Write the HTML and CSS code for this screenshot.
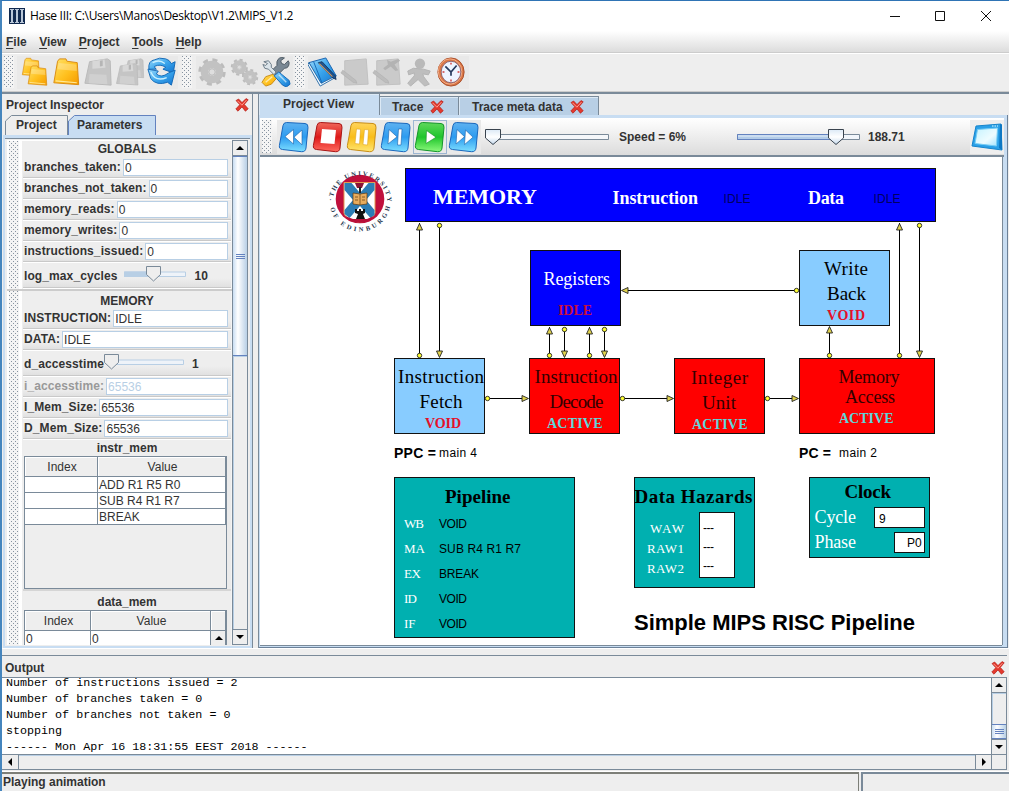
FILE: index.html
```
<!DOCTYPE html>
<html lang="en">
<head>
<meta charset="utf-8">
<title>Hase III</title>
<link rel="stylesheet" href="styles.css">
</head>
<body>
<svg class="defs" width="0" height="0" aria-hidden="true">
  <defs>
    <linearGradient id="gold" x1="0" y1="0" x2="1" y2="1"><stop offset="0" stop-color="#ffe36a"/><stop offset=".55" stop-color="#ffc01e"/><stop offset="1" stop-color="#f59a00"/></linearGradient>
    <linearGradient id="sky" x1="0" y1="0" x2="1" y2="1"><stop offset="0" stop-color="#9ad9fb"/><stop offset=".5" stop-color="#3aa5ec"/><stop offset="1" stop-color="#1273cf"/></linearGradient>
    <linearGradient id="btnBlue" x1="0" y1="0" x2="0" y2="1"><stop offset="0" stop-color="#5fb2f0"/><stop offset=".5" stop-color="#2c9bf0"/><stop offset="1" stop-color="#7fe0ff"/></linearGradient>
    <linearGradient id="btnRed" x1="0" y1="0" x2="0" y2="1"><stop offset="0" stop-color="#f0695c"/><stop offset=".5" stop-color="#dd1a1a"/><stop offset="1" stop-color="#ff6a5e"/></linearGradient>
    <linearGradient id="btnGold" x1="0" y1="0" x2="0" y2="1"><stop offset="0" stop-color="#ffd55c"/><stop offset=".5" stop-color="#f9bd18"/><stop offset="1" stop-color="#ffe673"/></linearGradient>
    <linearGradient id="btnGreen" x1="0" y1="0" x2="0" y2="1"><stop offset="0" stop-color="#5fd85c"/><stop offset=".5" stop-color="#1fc52c"/><stop offset="1" stop-color="#8df97c"/></linearGradient>
    <linearGradient id="thumb" x1="0" y1="0" x2="0" y2="1"><stop offset="0" stop-color="#dce9f6"/><stop offset=".5" stop-color="#fff"/><stop offset="1" stop-color="#c4d8ec"/></linearGradient>
    <linearGradient id="screen" x1="0" y1="0" x2="1" y2="1"><stop offset="0" stop-color="#c5f3ff"/><stop offset=".6" stop-color="#eefcff"/><stop offset="1" stop-color="#a4e4ff"/></linearGradient>
    <symbol id="cross" viewBox="0 0 14 14"><path d="M1 2.600 3.600 1 7 4.600 11 .6l2.200 1.200L9.300 6.400l3.900 4.400-2.800 2.400L7 8.900l-4 4.300L.8 11l4-4.300z" fill="#e43a2e" stroke="#b31d16" stroke-width=".7"/><path d="m2.500 2.800 4.400 4.400 4.500-5" stroke="#ff9a8e" fill="none"/></symbol>
    <symbol id="folder" viewBox="0 0 32 32"><path d="M7 4.500 9 2h7l1 2.500L28 6l1.500 23.500L3 27.500z" fill="url(#gold)" stroke="#d98a10"/><path d="M8 6.500 27 8l.5 7L7 13z" fill="#fff" opacity=".25"/><path d="m5 25.500 22.500 2" stroke="#ffe99b" stroke-width="1.200"/></symbol>
    <symbol id="disk" viewBox="0 0 32 32"><path d="M7 5 26 2l3 2 1 26-28-2z" fill="#c5c5c5" stroke="#b9b9b9"/><path d="m10 4.500 13-2 1 9-14 1z" fill="#d8d8d8"/><path d="m18 4 3-.5v6l-3 .5z" fill="#b5b5b5"/><path d="m7 18 18 1 1 10-20-1z" fill="#d0d0d0"/></symbol>
    <symbol id="gear" viewBox="0 0 32 32"><circle cx="16" cy="16" r="12.600" fill="none" stroke="#bcbcbc" stroke-width="4" stroke-dasharray="5.200 4.700"/><circle cx="16" cy="16" r="8" fill="none" stroke="#c2c2c2" stroke-width="8"/><circle cx="16" cy="16" r="3.500" fill="#dedede" stroke="#b5b5b5"/></symbol>
    <symbol id="sheet" viewBox="0 0 32 32"><path d="M5 4 28 2l2 27-25 1z" fill="#cacaca" stroke="#c0c0c0"/><path d="m3 14 14 11 1 3-4-1L1 17z" fill="#bdbdbd" stroke="#adadad" stroke-width=".6"/></symbol>
    <symbol id="tile" viewBox="0 0 32 32"><path d="M8.500 1.500 27 2.500q3.400.3 3 4L28 27q-.5 4-4.500 3.700L4.500 28.500Q.8 28 1.400 24.500L5 4.500q.6-3 3.500-3z"/></symbol>
    <symbol id="rew" viewBox="0 0 32 32"><path d="M15.500 8.500v14.500L7 15.600zM24 9v14.800L16 16.200z" fill="#fff" stroke="#1a5fa8" stroke-width=".6"/></symbol>
    <symbol id="fwd" viewBox="0 0 32 32"><path d="m9 8.500 7.500 7.200L8 23zM17.500 9l7.500 7.200-8.500 7.400z" fill="#fff" stroke="#1a5fa8" stroke-width=".6"/></symbol>
    <symbol id="pointer" viewBox="0 0 16 16"><path d="M.5.500h15v8.500L8 15.500.5 9z" fill="url(#thumb)" stroke="#39434e"/></symbol>
  </defs>
</svg>

<div class="window">
  <header class="titlebar">
    <svg class="app-icon" viewBox="0 0 16 16"><rect width="16" height="16" fill="#10294f"/><path d="M1 1h4v1H4v12h1v1H1v-1h1V2H1zM6 1h4v1H9v12h1v1H6v-1h1V2H6zM11 1h4v1h-1v12h1v1h-4v-1h1V2h-1z" fill="#b9c7d8"/></svg>
    <span class="title">Hase III: C:\Users\Manos\Desktop\V1.2\MIPS_V1.2</span>
    <svg class="win-controls" viewBox="0 0 110 14"><path d="M1 7.500h10M46.500 2.500h9v9h-9zM92 2l10 10M102 2 92 12" fill="none" stroke="#111"/></svg>
  </header>

  <nav class="menubar"><span><u>F</u>ile</span><span><u>V</u>iew</span><span><u>P</u>roject</span><span><u>T</u>ools</span><span><u>H</u>elp</span></nav>

  <div class="toolbar">
    <i class="grip"></i>
    <div class="group files">
      <svg viewBox="0 0 32 32"><use href="#folder" width="25" height="22"/><use href="#folder" x="7" y="8" width="25" height="24"/></svg>
      <svg viewBox="0 0 32 32"><use href="#folder" width="32" height="32"/></svg>
      <svg viewBox="0 0 32 32"><use href="#disk" width="32" height="32"/></svg>
      <svg viewBox="0 0 32 32"><use href="#disk" x="9" width="23" height="24"/><use href="#disk" y="5" width="26" height="27"/></svg>
      <svg viewBox="0 0 32 32"><path d="M2 13Q1 4 8 3q5-3 12-1 4 1 6 5l4-2-2 12-11-4 3-2Q14 7 8 10q0 2 2 3z" fill="url(#sky)" stroke="#1268b5"/><path d="m1 13 11 2-2 3q5 5 13-1l7-3-4 16-4-3Q10 31 4 23z" fill="url(#sky)" stroke="#1268b5"/><path d="M6 6q7-4 13 1M4 16q5 11 17 6" fill="none" stroke="#c8f0ff" stroke-width="1.500"/></svg>
    </div>
    <i class="grip"></i>
    <div class="group build">
      <svg viewBox="0 0 32 32"><use href="#gear" width="32" height="32"/></svg>
      <svg viewBox="0 0 32 32"><use href="#gear" x="1" y="1" width="20" height="20"/><use href="#gear" x="13" y="12" width="19" height="19"/></svg>
      <svg viewBox="0 0 32 32"><path d="m17 20 8-8q5 0 5-6l-1-2-4 4-3-1-1-3 4-3q-6-2-8 4v4l-5 5z" fill="#7a8894" stroke="#4d5963"/><path d="m14 18-9 3-4 6 4 4 6-2 7-8z" fill="url(#gold)" stroke="#c78a12"/><path d="m3 5 5-1 3 4v3l5 5-2 3-6-6-4-1-2-4 3 1 2-2z" fill="#dbe4ea" stroke="#687884"/><path d="m14 20 5-4 11 9 1 4-4 3-4-2z" fill="url(#sky)" stroke="#1264b5"/><path d="m5 27 7-6M19 19l8 8" stroke="#fff" opacity=".6" stroke-width="1.500"/></svg>
    </div>
    <i class="grip"></i>
    <div class="group run">
      <svg viewBox="0 0 32 32"><path d="m1 6 18-5 11 19-16 9z" fill="url(#sky)" stroke="#135fae"/><path d="M1 6q-2 2 0 4l12 21 16-9 1-2-16 8z" fill="#eef8ff" stroke="#2b6ba5"/><path d="m6 5 9 23" stroke="#1466b4"/><path d="m11 6 4-1 14 15 1 4-4-2z" fill="#23548d" stroke="#0a2951" stroke-width=".8"/><path d="m12 7 14 14" stroke="#d09b65" stroke-width="1.200"/></svg>
      <svg viewBox="0 0 32 32"><use href="#sheet" width="32" height="32"/></svg>
      <svg viewBox="0 0 32 32"><use href="#sheet" width="32" height="32"/><path d="m16 3 4 2 8-3 2 2-6 4 4 6-3 1-5-5-6 4-2-2 5-4z" fill="#b3b3b3"/></svg>
      <svg viewBox="0 0 32 32"><circle cx="17" cy="7" r="5.500" fill="#b9b9b9"/><path d="m10 12 11 1 7 2-2 4-6-1 1 3 6 8-5 2-7-7-8 7-3-3 7-8v-3l-6 2-1-4z" fill="#bebebe" stroke="#b2b2b2"/></svg>
      <svg viewBox="0 0 32 32"><ellipse cx="16" cy="16" rx="14" ry="15" fill="#d97646" stroke="#a94c28"/><ellipse cx="15" cy="15.500" rx="12.500" ry="13.500" fill="none" stroke="#f5b28d"/><ellipse cx="16" cy="16" rx="10.500" ry="11.500" fill="#eef4ff" stroke="#8a6372"/><path d="m10 10 6 6 6-7M16 16v4" fill="none" stroke="#26395d" stroke-width="1.800"/><path d="M16 6v2M16 24v2M7 16h2M23 16h2" stroke="#d23c3c" stroke-width="1.500"/></svg>
    </div>
  </div>

  <main class="workspace">
    <aside class="inspector">
      <div class="pane-head"><span>Project Inspector</span><svg class="x"><use href="#cross"/></svg></div>
      <div class="tabs">
        <svg class="tab-shape" viewBox="0 0 156 20"><path d="M.5 20V6L6.500.500H62.500V20" fill="#eee" stroke="#7a8a99"/><path d="M63.500 20V6L69.500.500H150.500V20" fill="#c8ddf2" stroke="#6382bf"/></svg>
        <span class="tab-name first">Project</span><span class="tab-name second">Parameters</span>
      </div>
      <div class="inspector-body">
        <div class="params">
          <section class="bar globals">
            <i class="grip"></i>
            <div class="fields">
              <h3>GLOBALS</h3>
              <div class="row"><label>branches_taken:</label><b>0</b></div>
              <div class="row"><label>branches_not_taken:</label><b>0</b></div>
              <div class="row"><label>memory_reads:</label><b>0</b></div>
              <div class="row"><label>memory_writes:</label><b>0</b></div>
              <div class="row"><label>instructions_issued:</label><b>0</b></div>
              <div class="row slide"><label>log_max_cycles</label><svg viewBox="0 0 62 16"><path d="M.5 6h61v4.500H.5z" fill="#eef3f9" stroke="#b8cfe5"/><path d="M0 5.500h29v5.500H0z" fill="#b8cfe5"/><path d="M22.500.500h14v8L29.500 15l-7-6.500z" fill="#eee" stroke="#7a8a99"/></svg><em>10</em></div>
            </div>
          </section>
          <section class="bar memory">
            <i class="grip"></i>
            <div class="fields">
              <h3>MEMORY</h3>
              <div class="row"><label>INSTRUCTION:</label><b>IDLE</b></div>
              <div class="row"><label>DATA:</label><b>IDLE</b></div>
              <div class="row slide low"><label>d_accesstime</label><svg viewBox="0 0 80 16"><path d="M7 6h72.500v4.500H7z" fill="#eef3f9" stroke="#b8cfe5"/><path d="M.5.500h14v8L7.500 15l-7-6.500z" fill="#eee" stroke="#7a8a99"/></svg><em>1</em></div>
              <div class="row off"><label>i_accesstime:</label><b>65536</b></div>
              <div class="row"><label>I_Mem_Size:</label><b>65536</b></div>
              <div class="row"><label>D_Mem_Size:</label><b>65536</b></div>
              <h3 class="mem-title">instr_mem</h3>
              <div class="grid instr">
                <div class="cells"><span class="th">Index</span><span class="th">Value</span><span></span><span>ADD R1 R5 R0</span><span></span><span>SUB R4 R1 R7</span><span></span><span>BREAK</span></div>
              </div>
              <h3 class="data-title">data_mem</h3>
              <div class="grid data">
                <div class="cells"><span class="th">Index</span><span class="th">Value</span><span class="th"></span><span>0</span><span>0</span><span class="mini"><svg viewBox="0 0 8 4"><path d="M0 4h8L4 0z"/></svg></span></div>
              </div>
            </div>
          </section>
        </div>
        <div class="vscroll side"><span class="arrow"><svg viewBox="0 0 8 4"><path d="M0 4h8L4 0z"/></svg></span><span class="knob"></span><span class="space"></span><span class="arrow"><svg viewBox="0 0 8 4"><path d="M0 0h8L4 4z"/></svg></span></div>
      </div>
    </aside>

    <section class="project">
      <div class="project-tabs"><span class="on">Project View</span><span class="trace">Trace<svg class="x"><use href="#cross"/></svg></span><span class="meta">Trace meta data<svg class="x"><use href="#cross"/></svg></span></div>
      <div class="project-body">
        <div class="playbar">
          <i class="grip"></i>
          <div class="buttons">
            <svg viewBox="0 0 32 32"><use href="#tile" fill="url(#btnBlue)" stroke="#1b68bd"/><use href="#rew"/></svg>
            <svg viewBox="0 0 32 32"><use href="#tile" fill="url(#btnRed)" stroke="#a81515"/><path d="m10 8 14 1-1.500 14L8.500 22z" fill="#fff"/></svg>
            <svg viewBox="0 0 32 32"><use href="#tile" fill="url(#btnGold)" stroke="#c88d16"/><path d="m10.500 8 4 .3L13.500 23l-4.500-.5zM18.500 8.500l4 .3L21.500 24l-4.500-.5z" fill="#fff" stroke="#d99c14" stroke-width=".5"/></svg>
            <svg viewBox="0 0 32 32"><use href="#tile" fill="url(#btnBlue)" stroke="#1b68bd"/><path d="m9 8.500 8 7.300L8 23zM18.500 8h3.500l-1 16h-3.500z" fill="#fff" stroke="#1a5fa8" stroke-width=".6"/></svg>
            <svg class="active" viewBox="0 0 32 32"><use href="#tile" fill="url(#btnGreen)" stroke="#14952a"/><path d="m12.500 9.500 9.500 6.700L12 22.500z" fill="#fff" stroke="#168a26" stroke-width=".6"/></svg>
            <svg viewBox="0 0 32 32"><use href="#tile" fill="url(#btnBlue)" stroke="#1b68bd"/><use href="#fwd"/></svg>
          </div>
          <svg class="slider speed" viewBox="0 0 126 16"><path d="M8 5.500h115.500v5H8z" fill="#f5f7fa" stroke="#7a8a99"/><use href="#pointer" width="16" height="16"/></svg>
          <span class="speed-label">Speed = 6%</span>
          <svg class="slider time" viewBox="0 0 124 16"><path d="M.5 5.500h122v5H.5z" fill="#f1f5fa" stroke="#7a8a99"/><path d="M.5 5.500H99v5H.5z" fill="#b3cce8" stroke="#6382bf"/><path d="M1 7h97" stroke="#e3edf8"/><use href="#pointer" x="91" width="16" height="16"/></svg>
          <span class="time-label">188.71</span>
          <svg class="screen-icon" viewBox="0 0 34 34"><path d="M6 6 31 4l1 26-30-4z" fill="#2aa0e8" stroke="#1685cc"/><path d="m30 4 2 .5V30l-3-2z" fill="#0d78c4"/><path d="m7.500 9.500 20-1.500-1 18L5 23.500z" fill="url(#screen)" stroke="#75cdf5"/><path d="M22 6h6" stroke="#dff" stroke-dasharray="1.500 1"/></svg>
        </div>
        <svg class="canvas" viewBox="260 157 742 488">
          <defs>
            <path id="arcTop" d="M332.500 203a27.300 27.300 0 1 1 55 0"/>
            <path id="arcBottom" d="M329.500 201a30.500 30.500 0 0 0 61 0"/>
            <g id="up"><path d="M0 .5 3 7h-6z" fill="#e0d24c" stroke="#222" stroke-width=".9"/></g>
            <g id="down"><path d="M0-.5 3-7h-6z" fill="#e0d24c" stroke="#222" stroke-width=".9"/></g>
            <g id="left"><path d="m.5 0 6.500 3v-6z" fill="#e0d24c" stroke="#222" stroke-width=".9"/></g>
            <g id="right"><path d="M-.5 0-7 3v-6z" fill="#e0d24c" stroke="#222" stroke-width=".9"/></g>
            <circle id="dot" r="2.200" fill="#ff3" stroke="#222" stroke-width=".9"/>
          </defs>

          <g class="crest">
            <circle cx="360" cy="199" r="24.300" fill="#c0103c"/>
            <path d="M344 182.500h31v30.500q-1 6-15.500 9.500-14.500-3.500-15.500-9.500z" fill="#fff" stroke="#e39a50"/>
            <path d="m344.500 183 7 0 8.500 10 8.500-10h6v7l-8.500 10 8.500 10v5l-4 3-10.500-12-10.500 12-5-4v-4l8.500-10-8.500-10z" fill="#2c7db5"/>
            <path d="M355 183h9l-2 5h-5z" fill="#8c1535"/><path d="M359 187h2v6h-2z" fill="#222"/>
            <path d="m353 193 7 1 7-1v11l-7 1-7-1z" fill="#e8ac5d" stroke="#5b3a16" stroke-width=".7"/><path d="M360 194v11M355 197h3M355 200h3M362 197h3M362 200h3" stroke="#704816" stroke-width=".8"/>
            <path d="M355 209h2v2h2v-2h2v2h2v-2h2v4l-2 1 2 5h-9l2-5-3-1z" fill="#111"/><path d="m345 216 8 3h14l7-3-4 5-10 2-11-2z" fill="#b80f38"/>
            <text class="ring"><textPath href="#arcTop" startOffset="2" textLength="87">·THE UNIVERSITY·</textPath></text>
            <text class="ring"><textPath href="#arcBottom" startOffset="7" textLength="83">OF EDINBURGH</textPath></text>
          </g>

          <g class="boxes">
            <rect x="405.500" y="168.500" width="530" height="53" fill="#00f"/>
            <rect x="530.500" y="250.500" width="90" height="75" fill="#00f"/>
            <rect x="799.500" y="250.500" width="90" height="75" fill="#8cf"/>
            <rect x="394.500" y="358.500" width="90" height="75" fill="#8cf"/>
            <rect x="529.500" y="358.500" width="90" height="75" fill="red"/>
            <rect x="674.500" y="358.500" width="90" height="75" fill="red"/>
            <rect x="799.500" y="358.500" width="135" height="75" fill="red"/>
            <rect x="394.500" y="477.500" width="180" height="160" fill="#00b0b0"/>
            <rect x="634.500" y="477.500" width="120" height="110" fill="#00b0b0"/>
            <rect x="809.500" y="477.500" width="120" height="80" fill="#00b0b0"/>
            <rect x="699.500" y="512.500" width="35" height="65" fill="#fff"/>
            <rect x="874.500" y="507.500" width="50" height="20" fill="#fff"/>
            <rect x="894.500" y="532.500" width="30" height="20" fill="#fff"/>
          </g>

          <path class="wires" d="M419.500 223v132M439.500 225v131M899.500 223v132M919.500 225v131M549.500 327v28M564.500 328v28M589.500 327v28M604.500 328v28M829.500 327v28M623 290.500h174M487 398.500h41M622 398.500h51M767 398.500h31"/>
          <use href="#up" x="419.500" y="223"/><use href="#up" x="899.500" y="223"/><use href="#up" x="549.500" y="327"/><use href="#up" x="589.500" y="327"/><use href="#up" x="829.500" y="326"/>
          <use href="#down" x="439.500" y="358"/><use href="#down" x="919.500" y="358"/><use href="#down" x="564.500" y="358"/><use href="#down" x="604.500" y="358"/>
          <use href="#left" x="621" y="290.500"/><use href="#right" x="529" y="398.500"/><use href="#right" x="674" y="398.500"/><use href="#right" x="799" y="398.500"/>
          <use href="#dot" x="419.500" y="355.500"/><use href="#dot" x="899.500" y="355.500"/><use href="#dot" x="549.500" y="355.500"/><use href="#dot" x="589.500" y="355.500"/><use href="#dot" x="829.500" y="355.500"/>
          <use href="#dot" x="439.500" y="225.500"/><use href="#dot" x="919.500" y="225.500"/><use href="#dot" x="564.500" y="329.500"/><use href="#dot" x="604.500" y="329.500"/>
          <use href="#dot" x="796.500" y="290.500"/><use href="#dot" x="487.500" y="398.500"/><use href="#dot" x="622.500" y="398.500"/><use href="#dot" x="767.500" y="398.500"/>

          <g class="serif bold white">
            <text class="s22" x="433" y="204" textLength="104">MEMORY</text>
            <text class="s18" x="612.500" y="204" textLength="85.500">Instruction</text>
            <text class="s18" x="808" y="204" textLength="36">Data</text>
          </g>
          <g class="sans s12 navy"><text x="723.500" y="203" textLength="27">IDLE</text><text x="873.500" y="203" textLength="27">IDLE</text></g>
          <g class="serif s19">
            <text class="white s18" x="543.500" y="285" textLength="66.500">Registers</text>
            <text x="824" y="275" textLength="44">Write</text><text x="827" y="300" textLength="39">Back</text>
            <text x="398" y="383" textLength="86">Instruction</text><text x="419.500" y="408" textLength="43">Fetch</text>
            <g fill="#300"><text x="534.500" y="383" textLength="83">Instruction</text><text x="549.500" y="408" textLength="54">Decode</text>
            <text x="691" y="384" textLength="57">Integer</text><text x="702" y="409" textLength="34">Unit</text>
            <text class="s18" x="838.500" y="383" textLength="61">Memory</text><text class="s18" x="845" y="403" textLength="50">Access</text></g>
          </g>
          <g class="serif bold s14">
            <text fill="#c8103c" x="558" y="315" textLength="34">IDLE</text>
            <g fill="#e4102a"><text x="827" y="319.500" textLength="38">VOID</text><text x="425" y="428" textLength="36">VOID</text></g>
            <g fill="#5fd6da"><text x="547" y="428" textLength="55.500">ACTIVE</text><text x="692" y="429" textLength="55.500">ACTIVE</text><text x="839" y="423" textLength="54.500">ACTIVE</text></g>
          </g>
          <g class="sans s12">
            <text class="bold s14" x="394" y="458" textLength="42">PPC =</text><text x="439" y="457" textLength="38">main 4</text>
            <text class="bold s14" x="799" y="458" textLength="32">PC =</text><text x="839" y="457" textLength="38">main 2</text>
            <text x="439" y="528" textLength="28">VOID</text><text x="439" y="553" textLength="82">SUB R4 R1 R7</text><text x="439" y="578" textLength="40">BREAK</text><text x="439" y="603" textLength="28">VOID</text><text x="439" y="628" textLength="28">VOID</text>
            <text x="703" y="532" textLength="11">---</text><text x="703" y="551" textLength="11">---</text><text x="703" y="570" textLength="11">---</text>
            <text x="879" y="523">9</text><text x="907" y="547">P0</text>
            <text class="bold s22" x="634" y="629.500" textLength="281">Simple MIPS RISC Pipeline</text>
          </g>
          <g class="serif bold s19">
            <text x="445" y="502.500" textLength="65.500">Pipeline</text><text x="634.500" y="503" textLength="118">Data Hazards</text><text x="844.500" y="498" textLength="46.500">Clock</text>
          </g>
          <g class="serif white">
            <g class="s13"><text x="404" y="528" textLength="20">WB</text><text x="404" y="553" textLength="21">MA</text><text x="404" y="578" textLength="17">EX</text><text x="404" y="603" textLength="13">ID</text><text x="404" y="628" textLength="11.500">IF</text>
            <text x="650" y="533" textLength="34">WAW</text><text x="647" y="553" textLength="37">RAW1</text><text x="647" y="573" textLength="37">RAW2</text></g>
            <g class="s18"><text x="814.500" y="523" textLength="41.500">Cycle</text><text x="814.500" y="548" textLength="41.500">Phase</text></g>
          </g>
        </svg>
      </div>
    </section>
  </main>

  <section class="output">
    <div class="pane-head"><span>Output</span><svg class="x"><use href="#cross"/></svg></div>
    <div class="output-body">
      <pre>Number of instructions issued = 2
Number of branches taken = 0
Number of branches not taken = 0
stopping
------ Mon Apr 16 18:31:55 EEST 2018 ------</pre>
      <div class="vscroll"><span class="arrow"><svg viewBox="0 0 8 4"><path d="M0 4h8L4 0z"/></svg></span><span class="space"></span><span class="knob"></span><span class="arrow"><svg viewBox="0 0 8 4"><path d="M0 0h8L4 4z"/></svg></span></div>
    </div>
    <div class="hscroll"><span><svg viewBox="0 0 4 8"><path d="M4 0v8L0 4z"/></svg></span><i></i><span class="end"><svg viewBox="0 0 4 8"><path d="M0 0v8l4-4z"/></svg></span><b></b></div>
  </section>
  <footer class="status"><span>Playing animation</span><i></i></footer>
</div>
</body>
</html>
```
FILE: styles.css
```
* { box-sizing: border-box; }
body { margin: 0; overflow: hidden; background: #eee; color: #333; font: bold 12px/14px "Liberation Sans", Arial, sans-serif; }
svg { display: block; flex: none; }
.defs { position: absolute; }
.window { width: 1009px; height: 791px; display: flex; flex-direction: column; background: #eee; border-left: 2px solid #4585bd; border-top: 1px solid #2f74b5; }
.x { width: 14px; height: 14px; }

.titlebar { height: 30px; flex: none; display: flex; align-items: center; background: #fff; padding: 0 10px 1px 7px; }
.app-icon { width: 16px; height: 16px; }
.title { margin-left: 5px; font: 12px/16px "Open Sans", "Noto Sans", sans-serif; letter-spacing: -.3px; color: #000; }
.win-controls { width: 110px; height: 14px; margin-left: auto; }

.menubar { height: 22px; flex: none; display: flex; gap: 12.500px; padding: 4px; background: linear-gradient(#fff, #dcdcdc); border-bottom: 1px solid #ccc; }
.menubar u { text-underline-offset: 2px; }

.grip { display: block; flex: none; background: linear-gradient(#8793a0 0 0) 1px 1px / 4px 4px, linear-gradient(#8793a0 0 0) 3px 3px / 4px 4px, #f3f3f3; background: conic-gradient(from 270deg at 1px 1px, #8793a0 90deg, transparent 0) 0 0 / 4px 4px, conic-gradient(from 270deg at 1px 1px, #8793a0 90deg, transparent 0) 2px 2px / 4px 4px, #f4f4f4; }
.toolbar { height: 39px; flex: none; display: flex; align-items: center; padding: 1px 0 2px 2px; border-bottom: 1px solid #ccc; border-top: 1px solid #fff; background: #eee; }
.toolbar .grip { width: 10px; height: 32px; margin-right: 3px; }
.group { height: 33px; display: flex; align-items: center; background: #e9e9e9; margin-right: 4px; }
.group svg { width: 30px; height: 30px; }
.files { width: 161px; gap: 2px; padding-left: 2px; }
.build { width: 97px; gap: 2px; padding-left: 1px; margin-left: 1px; }
.build + .grip { margin-left: -2px; }
.run { width: 161px; gap: 2px; }

.workspace { height: 557px; flex: none; display: flex; gap: 5px; border-top: 2px solid #7a8a99; padding-right: 1px; border-bottom: 1px solid #fff; }
.inspector { width: 251px; display: flex; flex-direction: column; border-right: 1px solid #7a8a99; }
.pane-head { display: flex; justify-content: space-between; align-items: center; }
.inspector .pane-head { height: 21px; padding: 1px 3px 0 4px; }
.tabs { height: 20px; flex: none; display: grid; grid-template-columns: 63px 93px; padding-left: 3px; }
.tab-shape { width: 156px; height: 20px; grid-area: 1 / 1 / 2 / 3; }
.tab-name { grid-row: 1; grid-column: 1; padding: 3px 0 0 11px; z-index: 1; }
.tab-name.second { grid-column: 2; padding-left: 9px; }
.inspector-body { flex: 1; min-height: 0; display: flex; border: 1px solid #7a8a99; border-top: 3px solid #c8ddf2; box-shadow: inset 0 0 0 1px #7a8a99; outline: 2px solid #c8ddf2; outline-offset: -2px; margin-left: 1px; padding: 2px 3px 2px; }
.params { flex: 1; overflow: hidden; background: #fff; padding-top: 1px; }
.bar { display: flex; gap: 3px; background: linear-gradient(90deg, #fff, #f4f4f4); }
.globals { height: 150px; border-bottom: 2px solid #ccc; }
.bar .grip { width: 10px; margin-left: 2px; }
.fields { width: 209px; padding-left: 1px; background: linear-gradient(90deg, #eee, #ebebeb); }
h3 { margin: 0; height: 17px; font-size: 12px; line-height: 17px; text-align: center; background: #eee; }
.memory h3:first-child { height: 18px; line-height: 20px; }
.row { height: 21px; display: flex; align-items: flex-start; border-bottom: 1px solid #fff; box-shadow: inset 0 -1px #c9c9c9; background: linear-gradient(#eee 60%, #dfdfdf); padding: 1px 3px 0 1px; }
.row label { white-space: nowrap; line-height: 17px; margin-right: 2px; letter-spacing: .1px; }
.row b { flex: 1; height: 17px; border: 1px solid #b8cfe5; background: #fff; font-weight: normal; line-height: 17px; padding-left: 1px; }
.row.slide { height: 26px; padding-top: 3px; }
.slide svg { width: 62px; height: 16px; margin-left: 5px; }
.slide label { line-height: 20px; }
.slide em { font-style: normal; line-height: 20px; margin-left: 8px; }
.low svg { width: 80px; margin-left: -2px; }
.off label { color: #999; }
.off b { color: #b8cfe5; }
.mem-title { height: 16px; line-height: 17px; }
.grid { margin: 0 4px 0 1px; border: 1px solid #7a8a99; background: #eee; font-weight: normal; }
.instr { height: 133px; }
.cells { display: grid; grid-template-columns: 73px 1fr; grid-template-rows: 20px; grid-auto-rows: 16px; }
.cells span { border-right: 1px solid #7a8a99; border-bottom: 1px solid #7a8a99; background: #fff; padding-left: 1px; line-height: 16px; }
.cells .th { text-align: center; background: #eee; line-height: 20px; box-shadow: inset 1px 1px #fff; padding-left: 2px; }
.data-title { height: 21px; line-height: 23px; border-top: 2px solid #d5d5d5; }
.data { height: 80px; }
.data .cells { grid-template-columns: 66px 120px 1fr; }
.data .cells .mini { background: #eee; padding: 5px 0 0 4px; }

.vscroll { width: 16px; flex: none; display: flex; flex-direction: column; background: #eee; border: 1px solid #7a8a99; }
.arrow { height: 15px; display: grid; place-items: center; border-bottom: 1px solid #7a8a99; }
.arrow:last-child { border-bottom: 0; border-top: 1px solid #7a8a99; }
.arrow svg, .mini svg { width: 8px; height: 4px; }
.space { flex: 1; box-shadow: inset 1px 1px #b8cfe5; }
.knob { border: 1px solid #6382bf; border-width: 1px 0; background: linear-gradient(#6382bf 0 0) center / 9px 1px no-repeat, linear-gradient(#6382bf 0 0) center calc(50% - 2px) / 9px 1px no-repeat, linear-gradient(#6382bf 0 0) center calc(50% + 2px) / 9px 1px no-repeat, linear-gradient(90deg, #c8ddf2, #fff 35%, #b8cfe5); }
.side .knob { height: 200px; }

.project { flex: 1; display: flex; flex-direction: column; border-left: 1px solid #7a8a99; }
.project-tabs { height: 21px; flex: none; display: flex; align-items: flex-end; }
.project-tabs span { height: 19px; display: flex; align-items: center; background: #b8cfe5; border: 1px solid #7a8a99; border-width: 1px 1px 0 0; padding: 1px 0 0 12px; gap: 7px; box-shadow: inset 1px 1px #dce9f5; }
.project-tabs .on { height: 21px; width: 121px; background: #c8ddf2; padding: 0 0 1px 24px; border-top: 0; }
.project-tabs .trace { width: 79px; }
.project-tabs .meta { width: 140px; padding-left: 13px; }
.project-body { flex: 1; display: flex; flex-direction: column; border: 1px solid #6b8199; border-left: 0; border-top: 0; background: #c8ddf2; padding: 3px 3px 2px 1px; }
.playbar { height: 39px; flex: none; display: flex; align-items: center; background: linear-gradient(#fff, #dcdcdc); border-bottom: 2px solid #7a8a99; }
.playbar .grip { width: 10px; height: 33px; margin: 0 5px 0 2px; }
.buttons { display: flex; height: 34px; background: #e9e9e9; align-items: center; }
.buttons svg { width: 34px; height: 34px; padding: 1px; }
.buttons .active { box-shadow: inset 0 0 0 1px #9db6d2; }
.slider { height: 16px; }
.speed { width: 126px; margin-left: 4px; }
.speed-label { margin-left: 8px; width: 118px; padding-top: 1px; }
.time { width: 124px; }
.time-label { margin-left: 7px; padding-top: 1px; }
.screen-icon { width: 34px; height: 34px; margin-left: auto; background: #eee; }
.canvas { width: 742px; height: 488px; background: #fff; box-shadow: 1px 0 #7a8a99, 0 1px #7a8a99; }
.boxes rect { stroke: #111; }
.wires { stroke: #000; fill: none; }
.ring { font: bold 6.500px "Liberation Serif", serif; fill: #25374f; }
.serif { font-family: "Liberation Serif", "Times New Roman", serif; font-weight: normal; fill: #000; }
.sans { font-family: "Liberation Sans", Arial, sans-serif; font-weight: normal; fill: #000; }
.bold { font-weight: bold; }
.white { fill: #fff; }
.navy { fill: #000060; }
.s12 { font-size: 12px; }
.s13 { font-size: 13px; }
.s14 { font-size: 14px; }
.s18 { font-size: 18px; }
.s19 { font-size: 19px; }
.s22 { font-size: 22px; }

.output { height: 115px; flex: none; margin-top: 6px; margin-right: 2px; border-top: 1px solid #7a8a99; display: flex; flex-direction: column; }
.output .pane-head { height: 21px; flex: none; padding: 2px 2px 0 3px; }
.output-body { flex: 1; display: flex; min-height: 0; background: #fff; border: 1px solid #7a8a99; border-width: 1px 0 0; overflow: hidden; }
.output-body .vscroll { border-bottom: 0; border-top: 0; }
.output .knob { height: 15px; }
pre { flex: 1; margin: -3px 0 0; padding-left: 4px; color: #000; font: 11.700px/16px "Liberation Mono", "Courier New", monospace; }
.hscroll { height: 16px; flex: none; display: flex; border: 1px solid #7a8a99; border-left: 0; }
.hscroll span { width: 17px; display: grid; place-items: center; border-right: 1px solid #7a8a99; }
.hscroll svg { width: 4px; height: 8px; }
.hscroll i { flex: 1; box-shadow: inset 0 1px #b8cfe5; }
.hscroll .end { border-left: 1px solid #7a8a99; }
.hscroll b { width: 14px; }
.status { flex: 1; margin-top: 1px; display: flex; gap: 2px; border-top: 1px solid #fff; }
.status span { width: 857px; border: 1px solid #7d7f78; border-width: 2px 1px 0 0; padding: 1px; }
.status i { flex: 1; border: 1px solid #7a8a99; border-width: 2px 0 0 2px; }
```
